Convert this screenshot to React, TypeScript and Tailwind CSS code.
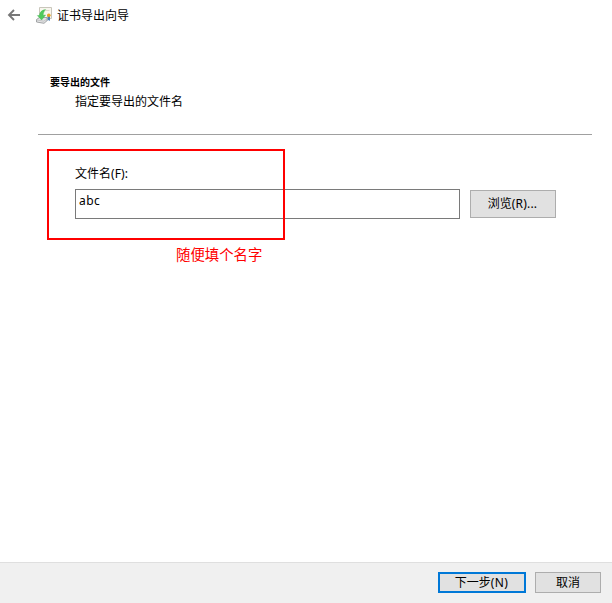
import { useState } from "react";

function BackArrow() {
  return (
    <svg width="14" height="12" viewBox="0 0 14 12" fill="none" stroke="#777" strokeWidth="1.9">
      <path d="M13 6H2M7 1L2 6l5 5" />
    </svg>
  );
}

function CertificateIcon() {
  return (
    <svg width="17" height="17" viewBox="0 0 17 17">
      {/* Certificate */}
      <path d="M3.5 0.5H15.5V11.5H3.5z" fill="#f8f6ee" stroke="#c9c6bb" strokeWidth="1" />
      <path d="M9.5 3.5h4" stroke="#dcd8ca" strokeWidth="1" />
      <path d="M11.5 9v5l1.2-1 1.3 1V9z" fill="#4b7fb4" />
      <circle cx="12.8" cy="8.2" r="1.8" fill="#e8a323" />
      {/* Drive */}
      <path d="M0.5 12.5L3.5 10.5h7.5v3.2L8 16.3 0.5 15z" fill="#e3e4e5" stroke="#999b9d" strokeWidth="0.9" />
      <path d="M1 13l6.8 1.2 3-2.2" fill="none" stroke="#b4b6b8" strokeWidth="0.7" />
      {/* Export arrow */}
      <path d="M9.6 2.6C5.8 3 3.8 5 3.4 8.4L1.4 8.6l4.2 4.4 4-5-2.5.3c.1-2.2.9-3.9 2.5-5.7z" fill="#4fca5d" stroke="#3bb34a" strokeWidth="0.4" />
    </svg>
  );
}

export default function App() {
  const [fileName, setFileName] = useState("abc");

  return (
    <div className="flex h-[603px] w-[612px] flex-col overflow-hidden bg-white font-['Noto_Sans','Noto_Sans_CJK_SC',sans-serif] text-[12px] leading-4 text-black">
      {/* Title bar */}
      <header className="flex h-[31px] shrink-0 items-center pl-[7px]">
        <button aria-label="返回" className="pb-0.5">
          <BackArrow />
        </button>
        <span className="ml-[15px]">
          <CertificateIcon />
        </span>
        <h1 className="ml-1">证书导出向导</h1>
      </header>

      <main className="flex-1">
        <div className="mr-5 ml-[38px] h-[104px] border-b border-[#a0a0a0] pt-[43px] pl-3">
          <h2 className="text-[10px] font-bold">要导出的文件</h2>
          <p className="mt-1 ml-[25px]">指定要导出的文件名</p>
        </div>

        <div className="relative pt-[31px] pl-[75px]">
          <label htmlFor="file-name" className="block h-[23px]">
            文件名<span className="tracking-[0.1px]">(F):</span>
          </label>
          <div className="flex items-center gap-2.5">
            <input
              id="file-name"
              value={fileName}
              onChange={(e) => setFileName(e.target.value)}
              className="h-[30px] w-[385px] border border-[#7a7a7a] bg-white pb-[7px] pl-[3px] tracking-[0.4px] outline-none"
            />
            <button className="h-7 w-[86px] border border-[#adadad] bg-[#e1e1e1] pr-px">
              浏览<span className="tracking-[0.2px]">(R)...</span>
            </button>
          </div>

          {/* Annotation */}
          <div className="pointer-events-none absolute top-[14px] left-[47px] h-[91px] w-[238px] border-2 border-[#ff0000]" />
          <p className="mt-[26px] ml-[101px] text-[14.4px] leading-5 text-[#ff0000]">随便填个名字</p>
        </div>
      </main>

      <footer className="flex h-[41px] shrink-0 items-start justify-end gap-[9px] border-t border-[#dfdfdf] bg-[#f0f0f0] pt-[9px] pr-[11px]">
        <button className="flex h-[21px] w-[88px] items-center justify-center border-2 border-[#0078d7] bg-[#e1e1e1] pr-px">
          下一步<span className="tracking-[0.4px]">(N)</span>
        </button>
        <button className="flex h-[21px] w-[66px] items-center justify-center border border-[#adadad] bg-[#e1e1e1]">
          取消
        </button>
      </footer>
    </div>
  );
}
